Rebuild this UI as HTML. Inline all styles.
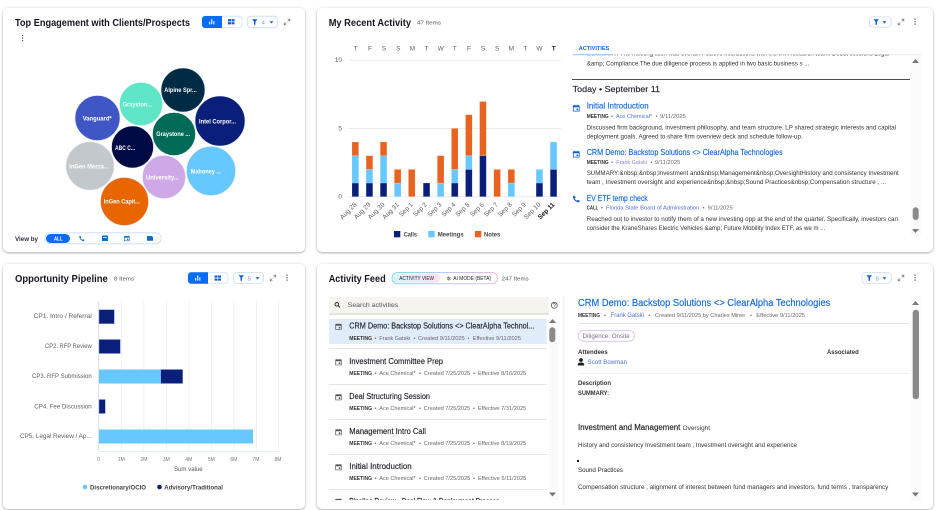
<!DOCTYPE html>
<html lang="en"><head><meta charset="utf-8"><title>Dashboard</title>
<style>
html,body{margin:0;padding:0;background:#fff;width:936px;height:510px;overflow:hidden}
.card{position:absolute;background:#fff;border-radius:5px;box-shadow:0 1px 2px rgba(0,0,0,.28),0 0 3px rgba(0,0,0,.1)}
svg{position:absolute;left:0;top:0;filter:blur(.3px)}
text{font-family:"Liberation Sans",sans-serif;font-size:6.5px;fill:#444}
.h{font-size:10px;font-weight:700;fill:#14171f}
.c{font-size:6.5px;fill:#5c5c5c}
.m{font-size:5.2px;font-weight:700;fill:#333}
.s{font-size:5.6px;fill:#666}
.l{font-size:5.6px;fill:#4a70dc}
.d{font-size:6.2px;fill:#333}
.a{font-size:8.5px;fill:#1569dc;stroke:#1569dc;stroke-width:.15}
.r{font-size:8px;fill:#1e2026;stroke:#1e2026;stroke-width:.15}
.b{font-size:6px;font-weight:700;fill:#fff}
</style></head><body>
<div class="card" style="left:3px;top:8px;width:302px;height:244px"></div>
<div class="card" style="left:317px;top:8px;width:616px;height:244px"></div>
<div class="card" style="left:3px;top:264px;width:302px;height:245px"></div>
<div class="card" style="left:317px;top:264px;width:616px;height:245px"></div>
<svg width="936" height="510" viewBox="0 0 936 510" xmlns="http://www.w3.org/2000/svg">
<defs>
<symbol id="bars" viewBox="0 0 10 10"><path d="M1 5h1.600v4H1zM4.200 1h1.600v8H4.200zM7.400 4h1.600v5H7.400z"/></symbol>
<symbol id="grid" viewBox="0 0 10 10"><path d="M0 1h4.600v3.400H0zM5.400 1H10v3.400H5.400zM0 5.600h4.600V9H0zM5.400 5.600H10V9H5.400z"/></symbol>
<symbol id="fun" viewBox="0 0 10 10"><path d="M0 0h10L6.300 4.400V10H3.700V4.400z"/></symbol>
<symbol id="exp" viewBox="0 0 10 10"><path d="M5.800 1H9v3.200M9 1 5.800 4.200M4.200 9H1V5.800M1 9l3.200-3.200" fill="none" stroke="#777" stroke-width="1"/></symbol>
<symbol id="cal" viewBox="0 0 10 10"><path d="M1 2h8v7.200H1z" fill="none" stroke="currentColor" stroke-width="1"/><path d="M1 2h8v2H1zM2.500.7h1v1.600h-1zM6.500.7h1v1.600h-1zM5.400 5.600h2.200v2.200H5.400z" fill="currentColor"/></symbol>
<symbol id="ph" viewBox="0 0 10 10"><path d="M1.200 1.200 3.200.8l1 2.300-1.100.9c.6 1.200 1.500 2.100 2.700 2.700l.9-1.100 2.300 1-.4 2c-4 .3-7.700-3.400-7.400-7.400z" fill="currentColor"/></symbol>
</defs>

<!-- CARD 1 -->
<text class="h" x="15" y="26" textLength="175" lengthAdjust="spacingAndGlyphs">Top Engagement with Clients/Prospects</text>
<rect x="202" y="16.200" width="40" height="11.500" rx="3.500" fill="#fff" stroke="#cfe2fb" stroke-width=".8"/>
<path d="M205 16h17v12h-17a3 3 0 0 1-3-3v-6a3 3 0 0 1 3-3z" fill="#0a6cf0"/>
<use href="#bars" x="208.500" y="18.500" width="6.500" height="6.500" fill="#fff"/>
<use href="#grid" x="228" y="18.500" width="6.500" height="6.500" fill="#0a5fd0"/>
<rect x="247.400" y="16.200" width="30" height="11.500" rx="3.500" fill="#fff" stroke="#c6dcf9" stroke-width=".8"/>
<use href="#fun" x="252" y="19" width="5.500" height="6" fill="#0a5fd0"/>
<text x="262" y="24.300" style="font-size:5px;fill:#5a7fd0">4</text>
<path d="M269.500 21.300h4l-2 2.200z" fill="#0a5fd0"/>
<use href="#exp" x="283.500" y="18.500" width="7" height="7"/>
<g fill="#555"><rect x="22" y="35" width="1.200" height="1.200"/><rect x="22" y="37.500" width="1.200" height="1.200"/><rect x="22" y="40" width="1.200" height="1.200"/></g>

<g stroke="#dfe6f5" stroke-width=".6">
<circle cx="183" cy="90" r="22" fill="#002b45"/>
<circle cx="220" cy="121" r="25" fill="#0a1f7a"/>
<circle cx="141" cy="104" r="21.500" fill="#5fe6c8"/>
<circle cx="97.500" cy="118" r="22.500" fill="#4056c4"/>
<circle cx="174" cy="134" r="21.500" fill="#026b58"/>
<circle cx="132.500" cy="147" r="21" fill="#000b45"/>
<circle cx="211" cy="171" r="24.500" fill="#66c8ff"/>
<circle cx="164" cy="177" r="21.500" fill="#cfa8e8"/>
<circle cx="90" cy="166" r="24" fill="#c2c8cc"/>
<circle cx="124.500" cy="201.500" r="24" fill="#e86500"/>
</g>
<text class="b" x="164.300" y="92.200" textLength="32.400" lengthAdjust="spacingAndGlyphs">Alpine Spr...</text>
<text class="b" x="199" y="123.300" textLength="37" lengthAdjust="spacingAndGlyphs">Intel Corpor...</text>
<text class="b" x="122.700" y="106.300" textLength="29.300" lengthAdjust="spacingAndGlyphs" style="fill:#e8fbf6">Grayston...</text>
<text class="b" x="82.700" y="120.300" textLength="29" lengthAdjust="spacingAndGlyphs">Vanguard*</text>
<text class="b" x="156.300" y="136.200" textLength="33.700" lengthAdjust="spacingAndGlyphs">Graystone ...</text>
<text class="b" x="115" y="150" textLength="20" lengthAdjust="spacingAndGlyphs">ABC C...</text>
<text class="b" x="190.700" y="173.500" textLength="30.300" lengthAdjust="spacingAndGlyphs">Mahoney ...</text>
<text class="b" x="146" y="179.500" textLength="32.700" lengthAdjust="spacingAndGlyphs">University...</text>
<text class="b" x="69.300" y="168.300" textLength="39.400" lengthAdjust="spacingAndGlyphs">InGen Mezza...</text>
<text class="b" x="103.700" y="203.700" textLength="36.300" lengthAdjust="spacingAndGlyphs">InGen Capit...</text>

<text x="15" y="241" textLength="23" lengthAdjust="spacingAndGlyphs" style="font-size:6.200px;font-weight:700;fill:#2b2f3a">View by</text>
<rect x="44.800" y="232.800" width="116.400" height="11" rx="5.500" fill="#fff" stroke="#c6dcf9" stroke-width=".8"/>
<rect x="46" y="234" width="24" height="9" rx="4.500" fill="#0a6cf0"/>
<text x="54" y="240.600" textLength="8.500" lengthAdjust="spacingAndGlyphs" style="font-size:5px;font-weight:700;fill:#fff">ALL</text>
<use href="#ph" x="78.500" y="235.500" width="6.500" height="6.500" style="color:#0a6cc8"/>
<rect x="102" y="235.500" width="6" height="5.500" rx=".5" fill="#0a6cc8"/><rect x="103" y="237" width="4" height=".8" fill="#fff"/>
<use href="#cal" x="123.700" y="235" width="6.200" height="6.500" style="color:#0a6cc8"/>
<path d="M147 236h4.500l1.500 1v3.800h-6z" fill="#0a6cc8"/>

<!-- CARD 2 -->
<text class="h" x="328.700" y="26" textLength="82.300" lengthAdjust="spacingAndGlyphs">My Recent Activity</text>
<text x="417" y="24.500" textLength="24" lengthAdjust="spacingAndGlyphs" style="font-size:5.800px;fill:#555">47 Items</text>
<g>
<text class="c" x="355.500" y="50.500" text-anchor="middle">T</text><text class="c" x="370" y="50.500" text-anchor="middle">F</text><text class="c" x="384" y="50.500" text-anchor="middle">S</text><text class="c" x="398.300" y="50.500" text-anchor="middle">S</text><text class="c" x="412.500" y="50.500" text-anchor="middle">M</text><text class="c" x="426.500" y="50.500" text-anchor="middle">T</text><text class="c" x="440.700" y="50.500" text-anchor="middle">W</text><text class="c" x="454.800" y="50.500" text-anchor="middle">T</text><text class="c" x="469" y="50.500" text-anchor="middle">F</text><text class="c" x="483" y="50.500" text-anchor="middle">S</text><text class="c" x="497.200" y="50.500" text-anchor="middle">S</text><text class="c" x="511.300" y="50.500" text-anchor="middle">M</text><text class="c" x="525.500" y="50.500" text-anchor="middle">T</text><text class="c" x="539.500" y="50.500" text-anchor="middle">W</text><text class="c" x="553.700" y="50.500" text-anchor="middle" style="font-weight:700;fill:#222">T</text>
</g>
<text class="c" x="342" y="62" text-anchor="end">10</text><text class="c" x="342" y="130.500" text-anchor="end">5</text><text class="c" x="342" y="198.700" text-anchor="end">0</text>
<g fill="#e6e8ec"><rect x="349" y="59.700" width="212" height=".9"/><rect x="349" y="128" width="212" height=".9"/><rect x="349" y="196.300" width="212" height=".9"/></g>
<g stroke="#fff" stroke-opacity=".35" stroke-width=".5">
<g fill="#0a1f7a"><rect x="352" y="183" width="6.700" height="13.700"/><rect x="366.100" y="183" width="6.700" height="13.700"/><rect x="380.200" y="183" width="6.700" height="13.700"/><rect x="423.200" y="183" width="6.700" height="13.700"/><rect x="451.400" y="183" width="6.700" height="13.700"/><rect x="465.500" y="169.400" width="6.700" height="27.300"/><rect x="479.600" y="155.700" width="6.700" height="41"/><rect x="536.100" y="183" width="6.700" height="13.700"/><rect x="550.200" y="169.400" width="6.700" height="27.300"/></g>
<g fill="#66c8ff"><rect x="352" y="155.700" width="6.700" height="27.300"/><rect x="366.100" y="169.400" width="6.700" height="13.600"/><rect x="380.200" y="155.700" width="6.700" height="27.300"/><rect x="394.300" y="183" width="6.700" height="13.700"/><rect x="437.300" y="183" width="6.700" height="13.700"/><rect x="451.400" y="169.400" width="6.700" height="13.600"/><rect x="465.500" y="155.700" width="6.700" height="13.700"/><rect x="508" y="183" width="6.700" height="13.700"/><rect x="536.100" y="169.400" width="6.700" height="13.600"/><rect x="550.200" y="142" width="6.700" height="27.400"/></g>
<g fill="#e8631f"><rect x="352" y="142" width="6.700" height="13.700"/><rect x="366.100" y="155.700" width="6.700" height="13.700"/><rect x="380.200" y="142" width="6.700" height="13.700"/><rect x="394.300" y="169.400" width="6.700" height="13.600"/><rect x="408.400" y="169.400" width="6.700" height="27.300"/><rect x="437.300" y="155.700" width="6.700" height="27.300"/><rect x="451.400" y="128.400" width="6.700" height="41"/><rect x="465.500" y="114.700" width="6.700" height="41"/><rect x="479.600" y="101.500" width="6.700" height="54.200"/><rect x="493.800" y="169.400" width="6.700" height="27.300"/><rect x="508" y="169.400" width="6.700" height="13.600"/></g>
</g>
<g>
<text class="c" text-anchor="end" transform="translate(357 205) rotate(-45)">Aug 28</text>
<text class="c" text-anchor="end" transform="translate(371 205) rotate(-45)">Aug 29</text>
<text class="c" text-anchor="end" transform="translate(385 205) rotate(-45)">Aug 30</text>
<text class="c" text-anchor="end" transform="translate(399.500 205) rotate(-45)">Aug 31</text>
<text class="c" text-anchor="end" transform="translate(413.500 205) rotate(-45)">Sep 1</text>
<text class="c" text-anchor="end" transform="translate(427.500 205) rotate(-45)">Sep 2</text>
<text class="c" text-anchor="end" transform="translate(442 205) rotate(-45)">Sep 3</text>
<text class="c" text-anchor="end" transform="translate(456 205) rotate(-45)">Sep 4</text>
<text class="c" text-anchor="end" transform="translate(470 205) rotate(-45)">Sep 5</text>
<text class="c" text-anchor="end" transform="translate(484.500 205) rotate(-45)">Sep 6</text>
<text class="c" text-anchor="end" transform="translate(498.500 205) rotate(-45)">Sep 7</text>
<text class="c" text-anchor="end" transform="translate(512.500 205) rotate(-45)">Sep 8</text>
<text class="c" text-anchor="end" transform="translate(526.500 205) rotate(-45)">Sep 9</text>
<text class="c" text-anchor="end" transform="translate(541 205) rotate(-45)">Sep 10</text>
<text class="c" text-anchor="end" transform="translate(555 205) rotate(-45)" style="font-weight:700;fill:#111">Sep 11</text>
</g>
<rect x="394" y="231" width="6.300" height="6.300" fill="#0a1f7a"/>
<text x="403.700" y="236.300" textLength="13.300" lengthAdjust="spacingAndGlyphs" style="font-size:6px;font-weight:700;fill:#444">Calls</text>
<rect x="428.300" y="231" width="6.300" height="6.300" fill="#66c8ff"/>
<text x="437.700" y="236.300" textLength="26" lengthAdjust="spacingAndGlyphs" style="font-size:6px;font-weight:700;fill:#444">Meetings</text>
<rect x="475" y="231" width="6.300" height="6.300" fill="#e8631f"/>
<text x="484" y="236.300" textLength="16.300" lengthAdjust="spacingAndGlyphs" style="font-size:6px;font-weight:700;fill:#444">Notes</text>

<rect x="869.600" y="16.900" width="21.500" height="10.300" rx="3" fill="#fff" stroke="#c6dcf9" stroke-width=".8"/>
<use href="#fun" x="873.500" y="19" width="5.500" height="6" fill="#0a5fd0"/>
<path d="M882.500 21.300h4l-2 2.200z" fill="#0a5fd0"/>
<use href="#exp" x="897.500" y="18.500" width="7" height="7"/>
<g fill="#666"><rect x="914.400" y="18.500" width="1.300" height="1.300"/><rect x="914.400" y="21" width="1.300" height="1.300"/><rect x="914.400" y="23.500" width="1.300" height="1.300"/></g>

<text x="578.700" y="50" textLength="30.600" lengthAdjust="spacingAndGlyphs" style="font-size:5.800px;font-weight:700;fill:#0a6cf0">ACTIVITIES</text>
<clipPath id="cl1"><rect x="570" y="54.500" width="345" height="10"/></clipPath>
<text class="d" x="586.700" y="55.500" textLength="302.300" lengthAdjust="spacingAndGlyphs" clip-path="url(#cl1)">SUMMARY: The meeting itself was overall. Positive interactions with the IRR research team. Debut sessions Legal</text>
<rect x="572.700" y="54" width="348.300" height=".7" fill="#e2e4e8"/>
<rect x="572.700" y="54" width="40" height="1.200" fill="#a8cbf8"/>
<text class="d" x="586.700" y="65.500" textLength="222.600" lengthAdjust="spacingAndGlyphs">&amp;amp; Compliance The due diligence process is applied in two basic business s ...</text>
<rect x="572" y="79" width="338" height=".8" fill="#222"/>
<text x="572.700" y="92" textLength="87.300" lengthAdjust="spacingAndGlyphs" style="font-size:8.500px;fill:#22252c;stroke:#22252c;stroke-width:.15">Today  •  September 11</text>

<use href="#cal" x="572.500" y="104" width="7.500" height="8" style="color:#0a5fd0"/>
<text class="a" x="586.700" y="108.500" textLength="62" lengthAdjust="spacingAndGlyphs">Initial Introduction</text>
<text class="m" x="586.700" y="118" textLength="22" lengthAdjust="spacingAndGlyphs">MEETING</text><text class="s" x="611" y="118">•</text>
<text class="l" x="616" y="118" textLength="36" lengthAdjust="spacingAndGlyphs">Ace Chemical*</text><text class="s" x="655.500" y="118">•</text>
<text class="s" x="660" y="118" textLength="26" lengthAdjust="spacingAndGlyphs">9/11/2025</text>
<text class="d" x="586.700" y="129.300" textLength="309.300" lengthAdjust="spacingAndGlyphs">Discussed firm background, investment philosophy, and team structure. LP shared strategic interests and capital</text>
<text class="d" x="586.700" y="138.300" textLength="216" lengthAdjust="spacingAndGlyphs">deployment goals. Agreed to share firm overview deck and schedule follow-up.</text>

<use href="#cal" x="572.500" y="150" width="7.500" height="8" style="color:#0a5fd0"/>
<text class="a" x="586.700" y="155" textLength="196" lengthAdjust="spacingAndGlyphs">CRM Demo: Backstop Solutions &lt;&gt; ClearAlpha Technologies</text>
<text class="m" x="586.700" y="164" textLength="22" lengthAdjust="spacingAndGlyphs">MEETING</text><text class="s" x="611" y="164">•</text>
<text class="l" x="616.300" y="164" textLength="30.700" lengthAdjust="spacingAndGlyphs" style="fill:#8a7fe0">Frank Gatski</text><text class="s" x="650.500" y="164">•</text>
<text class="s" x="655" y="164" textLength="25.300" lengthAdjust="spacingAndGlyphs">9/11/2025</text>
<text class="d" x="586.700" y="175" textLength="312" lengthAdjust="spacingAndGlyphs">SUMMARY:&amp;nbsp;&amp;nbsp;Investment and&amp;nbsp;Management&amp;nbsp;OversightHistory and consistency Investment</text>
<text class="d" x="586.700" y="184" textLength="299.300" lengthAdjust="spacingAndGlyphs">team , Investment oversight and experience&amp;nbsp;&amp;nbsp;Sound Practices&amp;nbsp;Compensation structure , ...</text>

<use href="#ph" x="572" y="195" width="8.500" height="8.500" style="color:#0a5fd0"/>
<text class="a" x="586.700" y="200.800" textLength="61" lengthAdjust="spacingAndGlyphs">EV ETF temp check</text>
<text class="m" x="586.700" y="209.700" textLength="11.600" lengthAdjust="spacingAndGlyphs">CALL</text><text class="s" x="601" y="209.700">•</text>
<text class="l" x="606" y="209.700" textLength="93.300" lengthAdjust="spacingAndGlyphs">Florida State Board of Administration</text><text class="s" x="702.500" y="209.700">•</text>
<text class="s" x="707.700" y="209.700" textLength="25" lengthAdjust="spacingAndGlyphs">9/11/2025</text>
<text class="d" x="586.700" y="221" textLength="311.300" lengthAdjust="spacingAndGlyphs">Reached out to investor to notify them of a new investing opp at the end of the quarter. Specifically, investors can</text>
<text class="d" x="586.700" y="230" textLength="238.600" lengthAdjust="spacingAndGlyphs">consider the KraneShares Electric Vehicles &amp;amp; Future Mobility Index ETF, as we m ...</text>

<rect x="911" y="55" width="10" height="181" fill="#fafafa"/>
<path d="M912 63h7l-3.500-4z" fill="#777"/><path d="M912 229h7l-3.500 4z" fill="#777"/>
<rect x="912.700" y="207.300" width="6" height="12.700" rx="3" fill="#8a8a8a"/>

<!-- CARD 3 -->
<text class="h" x="15" y="282" textLength="92.700" lengthAdjust="spacingAndGlyphs">Opportunity Pipeline</text>
<text x="114" y="280.500" textLength="20" lengthAdjust="spacingAndGlyphs" style="font-size:5.800px;fill:#555">8 Items</text>
<rect x="188" y="272.500" width="40" height="11" rx="3.500" fill="#fff" stroke="#cfe2fb" stroke-width=".8"/>
<path d="M191 272.300h17v11.500h-17a3 3 0 0 1-3-3v-5.500a3 3 0 0 1 3-3z" fill="#0a6cf0"/>
<use href="#bars" x="194.500" y="274.800" width="6.500" height="6.500" fill="#fff"/>
<use href="#grid" x="214.500" y="274.800" width="6.500" height="6.500" fill="#0a5fd0"/>
<rect x="233.600" y="272.500" width="30" height="11" rx="3.500" fill="#fff" stroke="#c6dcf9" stroke-width=".8"/>
<use href="#fun" x="238.500" y="275" width="5.500" height="6" fill="#0a5fd0"/>
<text x="248" y="280.500" style="font-size:5px;fill:#5a7fd0">5</text>
<path d="M255.500 277.300h4l-2 2.200z" fill="#0a5fd0"/>
<use href="#exp" x="269.500" y="274.500" width="7" height="7"/>
<g fill="#666"><rect x="286.400" y="274.500" width="1.300" height="1.300"/><rect x="286.400" y="277" width="1.300" height="1.300"/><rect x="286.400" y="279.500" width="1.300" height="1.300"/></g>

<g fill="#eceef1"><rect x="121" y="301" width=".8" height="150"/><rect x="143.500" y="301" width=".8" height="150"/><rect x="166" y="301" width=".8" height="150"/><rect x="188.500" y="301" width=".8" height="150"/><rect x="211" y="301" width=".8" height="150"/><rect x="233.500" y="301" width=".8" height="150"/><rect x="256" y="301" width=".8" height="150"/><rect x="278" y="301" width=".8" height="150"/></g>
<rect x="98.300" y="301" width=".9" height="150" fill="#d6dae0"/><rect x="98.300" y="451" width="180" height=".9" fill="#dfe8f5"/>
<g stroke="#8d9bd6" stroke-width=".5" fill="#0a1f7a"><rect x="99" y="309.700" width="15.300" height="14"/><rect x="99" y="339.500" width="21.300" height="14"/><rect x="160.700" y="369.500" width="22" height="14"/><rect x="99" y="399.500" width="6.300" height="14"/></g>
<rect x="99" y="369.500" width="61.700" height="14" fill="#66c8ff"/><rect x="99" y="429.500" width="154" height="14" fill="#66c8ff"/>
<g>
<text class="c" x="33.700" y="318" textLength="58" lengthAdjust="spacingAndGlyphs">CP1. Intro / Referral</text>
<text class="c" x="45" y="348" textLength="46.700" lengthAdjust="spacingAndGlyphs">CP2. RFP Review</text>
<text class="c" x="32" y="378" textLength="59.700" lengthAdjust="spacingAndGlyphs">CP3. RFP Submission</text>
<text class="c" x="34.300" y="408.300" textLength="57.400" lengthAdjust="spacingAndGlyphs">CP4. Fee Discussion</text>
<text class="c" x="20" y="438" textLength="71.700" lengthAdjust="spacingAndGlyphs">CP5. Legal Review / Ap...</text>
</g>
<g><text x="98.700" y="461" text-anchor="middle" style="font-size:5px;fill:#777">0</text><text x="121.300" y="461" text-anchor="middle" style="font-size:5px;fill:#777">1M</text><text x="143.800" y="461" text-anchor="middle" style="font-size:5px;fill:#777">2M</text><text x="166.300" y="461" text-anchor="middle" style="font-size:5px;fill:#777">3M</text><text x="188.800" y="461" text-anchor="middle" style="font-size:5px;fill:#777">4M</text><text x="211.300" y="461" text-anchor="middle" style="font-size:5px;fill:#777">5M</text><text x="233.800" y="461" text-anchor="middle" style="font-size:5px;fill:#777">6M</text><text x="256" y="461" text-anchor="middle" style="font-size:5px;fill:#777">7M</text><text x="278" y="461" text-anchor="middle" style="font-size:5px;fill:#777">8M</text></g>
<text x="174" y="471" textLength="28.700" lengthAdjust="spacingAndGlyphs" style="font-size:6px;fill:#555">Sum value</text>
<circle cx="85" cy="487" r="2.300" fill="#66c8ff"/>
<text x="90" y="489.300" textLength="56" lengthAdjust="spacingAndGlyphs" style="font-size:6px;font-weight:700;fill:#444">Discretionary/OCIO</text>
<circle cx="159.500" cy="487" r="2.300" fill="#0a1f7a"/>
<text x="164.300" y="489.300" textLength="58.700" lengthAdjust="spacingAndGlyphs" style="font-size:6px;font-weight:700;fill:#444">Advisory/Traditional</text>

<!-- CARD 4 -->
<defs><linearGradient id="gr" x1="0" x2="1" y1="0" y2="0"><stop offset="0" stop-color="#7fd8f5"/><stop offset=".5" stop-color="#b4c8f5"/><stop offset="1" stop-color="#f5b8e0"/></linearGradient>
<linearGradient id="gr2" x1="0" x2="1" y1="0" y2="0"><stop offset="0" stop-color="#d8f4fb"/><stop offset="1" stop-color="#f8e0f2"/></linearGradient></defs>
<text class="h" x="328.700" y="282" textLength="57" lengthAdjust="spacingAndGlyphs">Activity Feed</text>
<rect x="392" y="272.500" width="105.500" height="11.300" rx="5.600" fill="#fff" stroke="url(#gr)" stroke-width="1"/>
<rect x="393" y="273.500" width="47" height="9.300" rx="4.600" fill="url(#gr2)"/>
<text x="399.300" y="280.200" textLength="34.700" lengthAdjust="spacingAndGlyphs" style="font-size:5px;fill:#222">ACTIVITY VIEW</text>
<text x="446.500" y="280.400" style="font-size:5.500px;fill:#222">✲</text>
<text x="453.300" y="280.200" textLength="37.700" lengthAdjust="spacingAndGlyphs" style="font-size:5px;fill:#222">AI MODE (BETA)</text>
<text x="501.700" y="280.500" textLength="27" lengthAdjust="spacingAndGlyphs" style="font-size:5.800px;fill:#555">247 Items</text>

<rect x="329" y="297" width="219.700" height="17.700" fill="#f5f4ee"/><rect x="329" y="313.500" width="219.700" height="1.200" fill="#d8d8d0"/>
<circle cx="336.800" cy="304.300" r="1.800" fill="none" stroke="#222" stroke-width=".9"/><path d="m338.200 305.700 1.800 1.800" stroke="#222" stroke-width="1"/>
<text x="347.700" y="307" textLength="50.600" lengthAdjust="spacingAndGlyphs" style="font-size:6.500px;fill:#555">Search activities</text>
<circle cx="554.300" cy="305.300" r="3" fill="none" stroke="#555" stroke-width=".8"/><path d="M553.200 304.500a1.100 1.100 0 1 1 1.500 1.100l-.4.400v.5" fill="none" stroke="#555" stroke-width=".6"/>

<rect x="329" y="319" width="217.700" height="25" fill="#e0ecfa"/>
<g fill="#dcdee2"><rect x="329" y="348" width="218" height=".8"/><rect x="329" y="384" width="218" height=".8"/><rect x="329" y="419" width="218" height=".8"/><rect x="329" y="454" width="218" height=".8"/><rect x="329" y="489" width="218" height=".8"/></g>
<g style="color:#555">
<use href="#cal" x="335" y="323" width="7" height="7"/>
<use href="#cal" x="335" y="358.500" width="7" height="7"/>
<use href="#cal" x="335" y="393.500" width="7" height="7"/>
<use href="#cal" x="335" y="428.500" width="7" height="7"/>
<use href="#cal" x="335" y="463.500" width="7" height="7"/>
</g>
<text class="r" x="349.300" y="328.500" textLength="185" lengthAdjust="spacingAndGlyphs">CRM Demo: Backstop Solutions &lt;&gt; ClearAlpha Technol...</text>
<text class="m" x="349.300" y="340" textLength="22.700" lengthAdjust="spacingAndGlyphs">MEETING</text><text class="s" x="374.500" y="340">•</text>
<text class="s" x="379.300" y="340" textLength="31" lengthAdjust="spacingAndGlyphs">Frank Gatski</text><text class="s" x="413.500" y="340">•</text>
<text class="s" x="418" y="340" textLength="46.700" lengthAdjust="spacingAndGlyphs">Created 9/11/2025</text><text class="s" x="467.500" y="340">•</text>
<text class="s" x="472.700" y="340" textLength="48.300" lengthAdjust="spacingAndGlyphs">Effective 9/11/2025</text>

<text class="r" x="349.300" y="364" textLength="93.700" lengthAdjust="spacingAndGlyphs">Investment Committee Prep</text>
<text class="m" x="349.300" y="375" textLength="22.700" lengthAdjust="spacingAndGlyphs">MEETING</text><text class="s" x="374.500" y="375">•</text>
<text class="s" x="379.300" y="375" textLength="36.400" lengthAdjust="spacingAndGlyphs">Ace Chemical*</text><text class="s" x="419" y="375">•</text>
<text class="s" x="423.700" y="375" textLength="46.600" lengthAdjust="spacingAndGlyphs">Created 7/25/2025</text><text class="s" x="473" y="375">•</text>
<text class="s" x="478" y="375" textLength="48.300" lengthAdjust="spacingAndGlyphs">Effective 8/16/2025</text>

<text class="r" x="349.300" y="399" textLength="80.700" lengthAdjust="spacingAndGlyphs">Deal Structuring Session</text>
<text class="m" x="349.300" y="410" textLength="22.700" lengthAdjust="spacingAndGlyphs">MEETING</text><text class="s" x="374.500" y="410">•</text>
<text class="s" x="379.300" y="410" textLength="36.400" lengthAdjust="spacingAndGlyphs">Ace Chemical*</text><text class="s" x="419" y="410">•</text>
<text class="s" x="423.700" y="410" textLength="46.600" lengthAdjust="spacingAndGlyphs">Created 7/25/2025</text><text class="s" x="473" y="410">•</text>
<text class="s" x="478" y="410" textLength="48.300" lengthAdjust="spacingAndGlyphs">Effective 7/31/2025</text>

<text class="r" x="349.300" y="434" textLength="76.700" lengthAdjust="spacingAndGlyphs">Management Intro Call</text>
<text class="m" x="349.300" y="445" textLength="22.700" lengthAdjust="spacingAndGlyphs">MEETING</text><text class="s" x="374.500" y="445">•</text>
<text class="s" x="379.300" y="445" textLength="36.400" lengthAdjust="spacingAndGlyphs">Ace Chemical*</text><text class="s" x="419" y="445">•</text>
<text class="s" x="423.700" y="445" textLength="46.600" lengthAdjust="spacingAndGlyphs">Created 7/25/2025</text><text class="s" x="473" y="445">•</text>
<text class="s" x="478" y="445" textLength="48.300" lengthAdjust="spacingAndGlyphs">Effective 8/19/2025</text>

<text class="r" x="349.300" y="469" textLength="62.400" lengthAdjust="spacingAndGlyphs">Initial Introduction</text>
<text class="m" x="349.300" y="480" textLength="22.700" lengthAdjust="spacingAndGlyphs">MEETING</text><text class="s" x="374.500" y="480">•</text>
<text class="s" x="379.300" y="480" textLength="36.400" lengthAdjust="spacingAndGlyphs">Ace Chemical*</text><text class="s" x="419" y="480">•</text>
<text class="s" x="423.700" y="480" textLength="46.600" lengthAdjust="spacingAndGlyphs">Created 7/25/2025</text><text class="s" x="473" y="480">•</text>
<text class="s" x="478" y="480" textLength="48.300" lengthAdjust="spacingAndGlyphs">Effective 5/11/2025</text>

<clipPath id="cl2"><rect x="329" y="490" width="219" height="10"/></clipPath>
<g clip-path="url(#cl2)"><text class="r" x="349.300" y="504" textLength="150" lengthAdjust="spacingAndGlyphs">Pipeline Review - Deal Flow &amp; Deployment Process</text>
<use href="#cal" x="335" y="498" width="7" height="7" style="color:#555"/></g>

<rect x="549" y="316" width="9" height="184" fill="#fafafa"/>
<path d="M549 323h7l-3.500-4z" fill="#777"/><path d="M549 492.500h7l-3.500 4z" fill="#777"/>
<rect x="549.300" y="327.300" width="6" height="15" rx="3" fill="#8a8a8a"/>
<rect x="563.500" y="296" width=".8" height="209" fill="#e2e4e8"/>

<rect x="862" y="272.500" width="29.300" height="11" rx="3.500" fill="#fff" stroke="#c6dcf9" stroke-width=".8"/>
<use href="#fun" x="866.500" y="275" width="5.500" height="6" fill="#0a5fd0"/>
<text x="876" y="280.500" style="font-size:5px;fill:#5a7fd0">5</text>
<path d="M882.500 277.300h4l-2 2.200z" fill="#0a5fd0"/>
<use href="#exp" x="897.500" y="274.500" width="7" height="7"/>
<g fill="#666"><rect x="914.400" y="274.500" width="1.300" height="1.300"/><rect x="914.400" y="277" width="1.300" height="1.300"/><rect x="914.400" y="279.500" width="1.300" height="1.300"/></g>

<text x="578" y="306" textLength="252.300" lengthAdjust="spacingAndGlyphs" style="font-size:10.500px;fill:#1569dc;stroke:#1569dc;stroke-width:.18">CRM Demo: Backstop Solutions &lt;&gt; ClearAlpha Technologies</text>
<text class="m" x="578" y="317" textLength="22" lengthAdjust="spacingAndGlyphs">MEETING</text><text class="s" x="604" y="317">•</text>
<text class="l" x="610.700" y="317" textLength="33.300" lengthAdjust="spacingAndGlyphs" style="font-size:6px">Frank Gatski</text><text class="s" x="648.500" y="317">•</text>
<text class="s" x="655" y="317" textLength="90.300" lengthAdjust="spacingAndGlyphs">Created 9/11/2025 by Charles Miner</text><text class="s" x="750" y="317">•</text>
<text class="s" x="756.300" y="317" textLength="48.700" lengthAdjust="spacingAndGlyphs">Effective 9/11/2025</text>
<rect x="578" y="323" width="332" height=".8" fill="#dcdee2"/>
<rect x="578.300" y="330.500" width="56.200" height="10.800" rx="5.400" fill="#fff" stroke="#d4bdec" stroke-width=".8"/>
<text x="582.700" y="338" textLength="47" lengthAdjust="spacingAndGlyphs" style="font-size:6px;fill:#7a6a92">Diligence: Onsite</text>
<text x="578" y="353.800" textLength="29.700" lengthAdjust="spacingAndGlyphs" style="font-size:6px;font-weight:700;fill:#333">Attendees</text>
<text x="827" y="353.800" textLength="31.700" lengthAdjust="spacingAndGlyphs" style="font-size:6px;font-weight:700;fill:#333">Associated</text>
<circle cx="581" cy="360" r="1.900" fill="#222"/><path d="M577.800 365.500v-1.300c0-1 1.300-1.700 3.200-1.700s3.200.7 3.200 1.700v1.300z" fill="#222"/>
<text x="587.700" y="364" textLength="39.300" lengthAdjust="spacingAndGlyphs" style="font-size:6px;fill:#4a70dc">Scott Bowman</text>
<rect x="578" y="373" width="332" height=".8" fill="#eceef0"/>
<text x="578" y="385" textLength="33" lengthAdjust="spacingAndGlyphs" style="font-size:6px;font-weight:700;fill:#333">Description</text>
<text x="578" y="395" textLength="31" lengthAdjust="spacingAndGlyphs" style="font-size:6px;font-weight:700;fill:#333">SUMMARY:</text>
<text x="578" y="430.200" textLength="102.300" lengthAdjust="spacingAndGlyphs" style="font-size:8px;fill:#222;stroke:#222;stroke-width:.15">Investment and Management</text>
<text x="682.700" y="430.200" textLength="27.300" lengthAdjust="spacingAndGlyphs" style="font-size:6.200px;fill:#333">Oversight</text>
<text class="d" x="578" y="447" textLength="219" lengthAdjust="spacingAndGlyphs">History and consistency Investment team , Investment oversight and experience</text>
<rect x="577" y="460" width="2" height="2" fill="#111"/>
<text x="578" y="472" textLength="45" lengthAdjust="spacingAndGlyphs" style="font-size:6.400px;fill:#222">Sound Practices</text>
<text class="d" x="578" y="489" textLength="310.300" lengthAdjust="spacingAndGlyphs">Compensation structure , alignment of interest between fund managers and investors, fund terms , transparency</text>

<rect x="911" y="297" width="10" height="204" fill="#fafafa"/>
<path d="M912 305h7l-3.500-4z" fill="#777"/><path d="M912 492.500h7l-3.500 4z" fill="#777"/>
<rect x="912.700" y="309.700" width="6.300" height="89.600" rx="3" fill="#8a8a8a"/>
</svg>
</body></html>
